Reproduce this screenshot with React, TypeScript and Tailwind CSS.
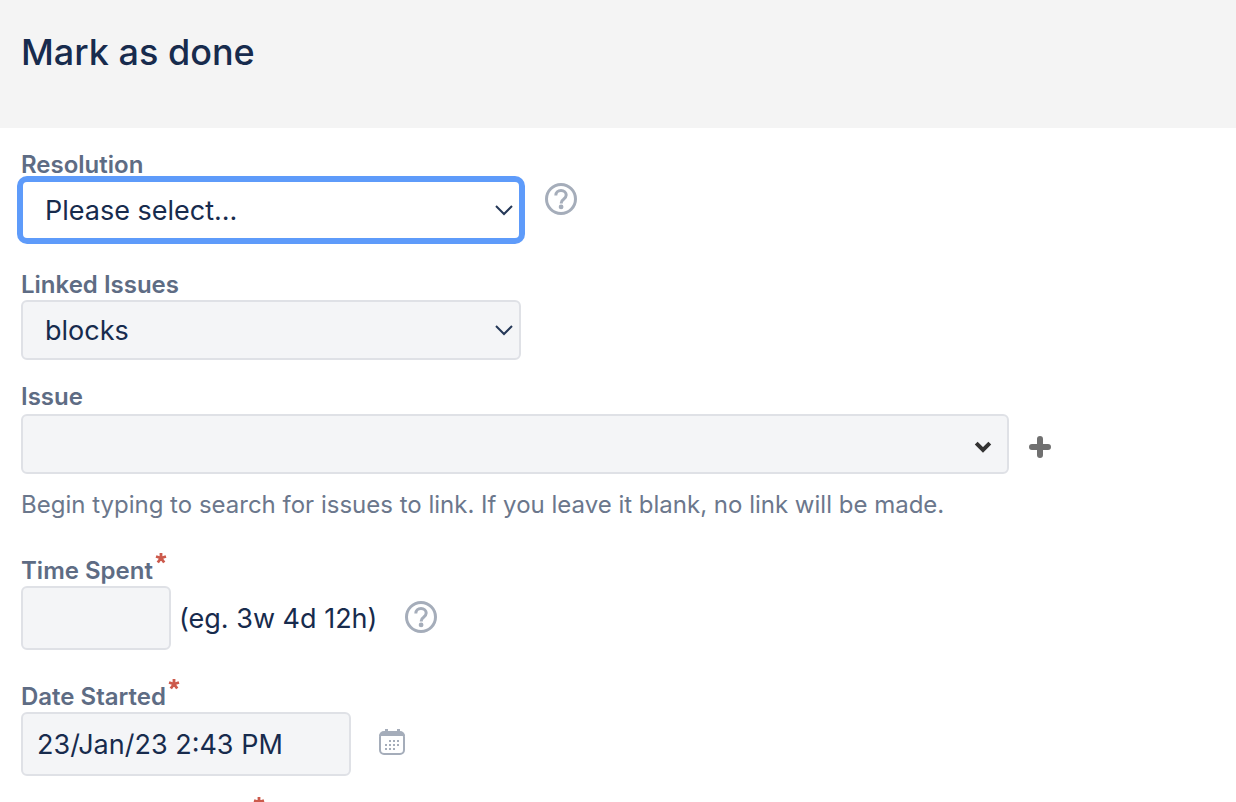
import type { ReactNode } from "react";
import clsx from "clsx";

const control = "block rounded-[6px] border-2 text-[27px] leading-8 text-[#172b4d] outline-none";
const idle = "border-[#dfe1e6] bg-[#f4f5f7]";
const active = "border-[#5e9bfa] bg-white ring-4 ring-[#5e9bfa]";

function RequiredMark() {
  return (
    <svg width="12" height="12" viewBox="0 0 12 12" className="-mt-[7px] shrink-0" aria-label="Required" role="img">
      <path
        d="M6 1v5M6 6L1 4.500M6 6l5-1.500M6 6l-3.200 4.500M6 6l3.200 4.500"
        stroke="#cc5a4c"
        strokeWidth="2.8"
        fill="none"
      />
    </svg>
  );
}

function FieldLabel({ id, required, children }: { id: string; required?: boolean; children: ReactNode }) {
  return (
    <label htmlFor={id} className="flex items-start gap-0.5 text-2xl leading-6 font-semibold text-[#5e6c84]">
      {children}
      {required && <RequiredMark />}
    </label>
  );
}

function SelectField({ id, options, focused }: { id: string; options: string[]; focused?: boolean }) {
  return (
    <div className="grid w-[500px] max-w-full items-center">
      <select
        id={id}
        className={clsx(
          control,
          focused ? active : idle,
          "col-start-1 row-start-1 h-[60px] w-full appearance-none px-[22px] pt-0.5",
        )}
      >
        {options.map((option) => (
          <option key={option}>{option}</option>
        ))}
      </select>
      <svg
        width="20"
        height="12"
        viewBox="0 0 20 12"
        className="pointer-events-none col-start-1 row-start-1 mr-[7px] justify-self-end"
      >
        <path d="M2 2l8 8 8-8" fill="none" stroke="#253858" strokeWidth="2" />
      </svg>
    </div>
  );
}

function HelpButton({ label }: { label: string }) {
  return (
    <button type="button" aria-label={label} className="shrink-0">
      <svg width="34" height="34" viewBox="0 0 34 34" fill="none" stroke="#a5adba">
        <circle cx="17" cy="17" r="14.5" strokeWidth="3" />
        <path
          d="M11.8 13.4c0-3 2.2-4.900 5.2-4.900s5.2 1.900 5.2 4.600c0 2-1.1 3-2.600 4.100-1.600 1.100-2.300 1.900-2.300 3.600v.6"
          strokeWidth="3"
        />
        <circle cx="17.1" cy="24.9" r="2.4" fill="#a5adba" stroke="none" />
      </svg>
    </button>
  );
}

function CalendarIcon() {
  const dots = [
    [14, 13], [18, 13], [22, 13],
    [10, 17], [14, 17], [18, 17], [22, 17],
    [10, 21], [14, 21], [18, 21],
  ];
  return (
    <svg width="32" height="32" viewBox="0 0 32 32">
      <rect x="4" y="5" width="24" height="21" rx="4" fill="none" stroke="#a5adba" strokeWidth="2" />
      <path d="M3 8a5 5 0 0 1 5-5h16a5 5 0 0 1 5 5z" fill="#a5adba" />
      <path d="M9 1h3v3H9zM21 1h3v3h-3z" fill="#a5adba" />
      {dots.map(([x, y]) => (
        <rect key={`${x}-${y}`} x={x - 1} y={y - 1} width="2" height="2" fill="#a5adba" />
      ))}
    </svg>
  );
}

export default function App() {
  return (
    <div className="h-screen overflow-hidden bg-white font-['Inter',sans-serif] text-[#172b4d]">
      <header className="h-32 bg-[#f4f4f4] px-[21px] pt-7">
        <h1 className="text-4xl leading-12 font-medium">Mark as done</h1>
      </header>

      <form className="px-[21px] pt-[25px]">
        <div className="mb-[33px]">
          <FieldLabel id="resolution">Resolution</FieldLabel>
          <div className="mt-[3px] flex gap-[23px]">
            <SelectField id="resolution" options={["Please select...", "Done", "Won't Do"]} focused />
            <div className="pt-0.5">
              <HelpButton label="Help with resolution" />
            </div>
          </div>
        </div>

        <div className="mb-[25px]">
          <FieldLabel id="linked-issues">Linked Issues</FieldLabel>
          <div className="mt-[3px]">
            <SelectField id="linked-issues" options={["blocks", "is blocked by", "relates to"]} />
          </div>
        </div>

        <div className="mb-[42px]">
          <FieldLabel id="issue">Issue</FieldLabel>
          <div className="mt-[5px] flex items-center gap-[18px]">
            <div className="grid w-[988px] items-center">
              <input
                id="issue"
                type="text"
                className={clsx(control, idle, "col-start-1 row-start-1 h-[60px] w-full pr-12 pl-3.5")}
              />
              <svg
                width="18"
                height="14"
                viewBox="0 0 18 14"
                className="pointer-events-none col-start-1 row-start-1 mt-1.5 mr-[17px] justify-self-end"
              >
                <path d="M2.2 3.2L9 10l6.800-6.800" fill="none" stroke="#333" strokeWidth="4" />
              </svg>
            </div>
            <button type="button" aria-label="Add issue" className="shrink-0 pt-1.5">
              <svg width="26" height="26" viewBox="0 0 26 26">
                <path d="M13 5v16M5 13h16" stroke="#707070" strokeWidth="6" strokeLinecap="round" />
              </svg>
            </button>
          </div>
          <p className="mt-[19px] text-2xl leading-6 text-[#6b778c]">
            Begin typing to search for issues to link. If you leave it blank, no link will be made.
          </p>
        </div>

        <div className="mb-[35px]">
          <FieldLabel id="time-spent" required>
            Time Spent
          </FieldLabel>
          <div className="mt-[3px] flex items-center">
            <input id="time-spent" type="text" className={clsx(control, idle, "h-16 w-[150px] px-3.5")} />
            <span className="ml-2 pt-0.5 text-[27px] leading-8">(eg. 3w 4d 12h)</span>
            <div className="ml-[27px] flex pb-0.5">
              <HelpButton label="Help with time spent" />
            </div>
          </div>
        </div>

        <div className="mb-[27px]">
          <FieldLabel id="date-started" required>
            Date Started
          </FieldLabel>
          <div className="mt-[3px] flex items-center gap-[25px]">
            <input
              id="date-started"
              type="text"
              defaultValue="23/Jan/23 2:43 PM"
              className={clsx(control, idle, "h-16 w-[330px] px-3.5")}
            />
            <button type="button" aria-label="Select a date">
              <CalendarIcon />
            </button>
          </div>
        </div>

        <div className="flex pl-[232px]">
          <RequiredMark />
        </div>
      </form>
    </div>
  );
}
